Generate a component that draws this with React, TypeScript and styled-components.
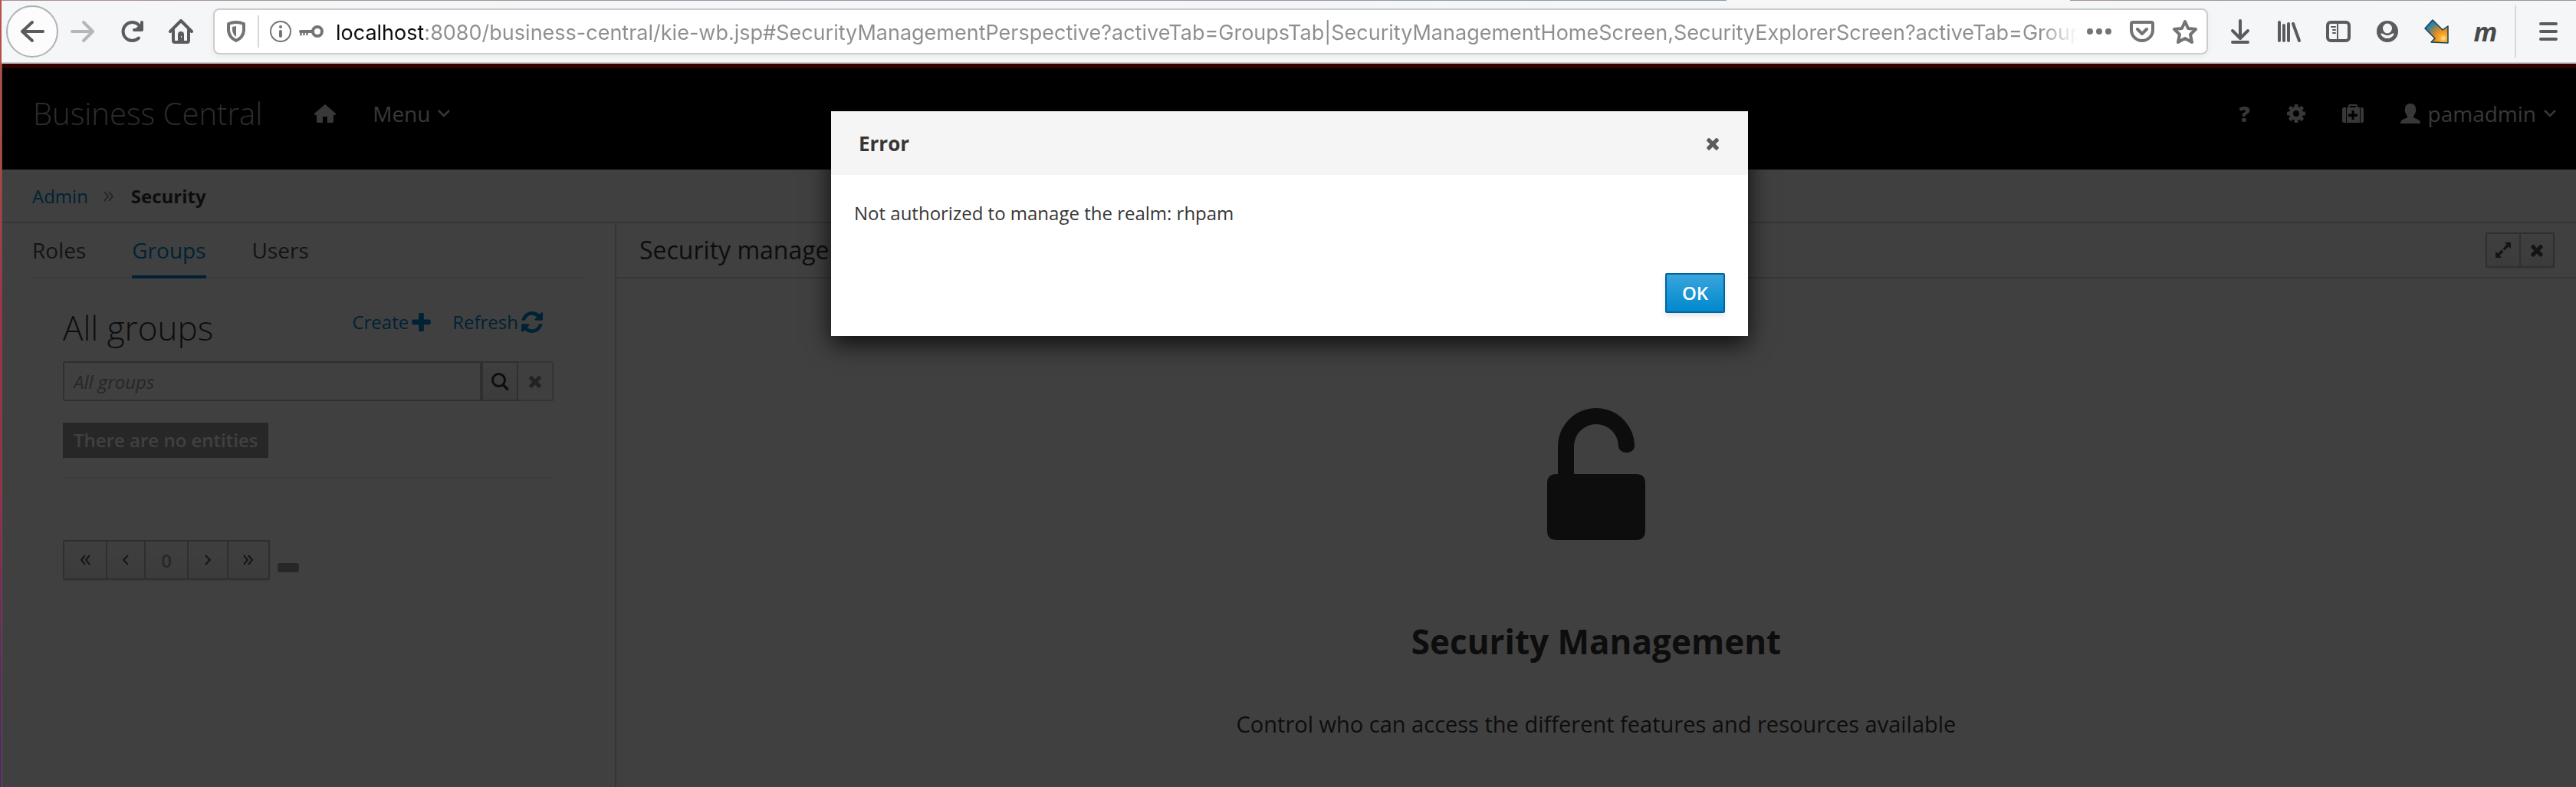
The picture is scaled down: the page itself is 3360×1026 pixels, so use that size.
import React from "react";
import styled, { createGlobalStyle, css } from "styled-components";

const colors = {
  text: "#363636",
  link: "#0088ce",
  border: "#d1d1d1",
  softBorder: "#ededed",
  control: "#bbbbbb",
  muted: "#9c9c9c",
  nav: "#dddddd",
  chrome: "#5a5b5d",
  urlIcon: "#737476",
};

const GlobalStyle = createGlobalStyle`
  *, *::before, *::after { box-sizing: border-box; }
  body {
    margin: 0;
    background: #fff;
    color: ${colors.text};
    font-family: "Open Sans", "Noto Sans", sans-serif;
    font-size: 24px;
  }
  button, input { font: inherit; color: inherit; }
  button { cursor: pointer; }
  svg { display: block; flex: none; }
  h1, h2, h3, p, ul, ol { margin: 0; padding: 0; }
`;

/* ---------- Window ---------- */

const Window = styled.div`
  min-height: 100vh;
  display: flex;
  flex-direction: column;
  padding-left: 2px;
  background: linear-gradient(#b9504b 0, #b8463f 20%, #b02a48 40%, #a82848 62%, #5c2a5c 85%, #4f2a5c 100%);
`;

const TabStrip = styled.div`
  display: grid;
  grid-template-columns: 2250fr 448fr 660fr;
  height: 1px;
  background: #f5f6f8;
`;

const TabEdge = styled.span`
  background: linear-gradient(to right, #a8909a, #8f9aa0);
`;

const Toolbar = styled.header`
  display: flex;
  align-items: center;
  height: 82px;
  padding: 0 4px 0 6px;
  background: #f5f6f8;
  border-bottom: 2px solid #cccccc;
`;

const ChromeButton = styled.button<{ $faded?: boolean }>`
  display: flex;
  align-items: center;
  justify-content: center;
  width: 64px;
  height: 64px;
  padding: 0;
  border: 0;
  background: none;
  color: ${(p) => (p.$faded ? "#b5b6b8" : colors.chrome)};
`;

const BackButton = styled(ChromeButton)`
  width: 68px;
  height: 68px;
  border: 2px solid #b1b1b3;
  border-radius: 50%;
  background: #fcfcfd;
`;

const ChromeDivider = styled.span`
  width: 2px;
  height: 68px;
  margin: 0 10px 0 6px;
  background: #d7d8da;
`;

const MonoMark = styled.span`
  font: italic 700 34px "Open Sans", sans-serif;
  line-height: 40px;
  color: #48494a;
`;

const UrlBar = styled.div`
  display: flex;
  align-items: center;
  flex: 1;
  min-width: 0;
  height: 60px;
  margin: 0 10px;
  border: 2px solid #cccccc;
  border-radius: 8px;
  background: #fff;
  box-shadow: 0 2px 8px rgba(0, 0, 0, 0.05);
  color: ${colors.urlIcon};
`;

const UrlButton = styled(ChromeButton)`
  width: 56px;
  height: 56px;
  flex: none;
  color: ${colors.urlIcon};
`;

const UrlDivider = styled.span`
  width: 2px;
  height: 42px;
  background: #d7d7db;
`;

const UrlIdentity = styled.span`
  display: flex;
  align-items: center;
  gap: 10px;
  padding: 0 16px 0 14px;
`;

const UrlInput = styled.input`
  flex: 1;
  min-width: 0;
  height: 56px;
  padding: 2px 0 0;
  border: 0;
  outline: 0;
  font-family: Inter, Roboto, sans-serif;
  font-size: 27px;
  -webkit-text-fill-color: transparent;
  background: linear-gradient(
    to right,
    #0c0c0d 0,
    #0c0c0d 114px,
    #8e8e8f 114px,
    #8e8e8f calc(100% - 48px),
    rgba(142, 142, 143, 0) 100%
  );
  -webkit-background-clip: text;
  background-clip: text;
`;

/* ---------- Application ---------- */

const Page = styled.div`
  position: relative;
  flex: 1;
  display: flex;
  flex-direction: column;
  border-left: 1px solid #555555;
  background: #fff;
`;

const Masthead = styled.nav`
  display: flex;
  align-items: center;
  height: 138px;
  padding: 0 26px 14px 40px;
  border-top: 6px solid #cc0000;
  background: #000;
  color: ${colors.nav};
  font-size: 28px;
`;

const Brand = styled.a`
  margin-right: 68px;
  color: #b4b4b4;
  font-size: 40px;
  font-weight: 300;
  line-height: 52px;
  text-decoration: none;
`;

const NavGroup = styled.div<{ $end?: boolean }>`
  display: flex;
  align-items: center;
  gap: 48px;
  ${(p) => p.$end && css`margin-left: auto;`}
`;

const NavButton = styled.button<{ $strong?: boolean }>`
  display: flex;
  align-items: center;
  gap: 10px;
  padding: 0;
  border: 0;
  background: none;
  line-height: 40px;
  font-weight: ${(p) => (p.$strong ? 800 : 400)};
`;

const Breadcrumb = styled.ol`
  display: flex;
  align-items: center;
  gap: 22px;
  height: 70px;
  padding: 2px 39px 0;
  border-bottom: 2px solid ${colors.border};
  list-style: none;
  line-height: 36px;
`;

const CrumbItem = styled.li<{ $current?: boolean }>`
  display: flex;
  align-items: center;
  gap: 20px;
  font-weight: ${(p) => (p.$current ? 700 : 400)};
  color: ${(p) => (p.$current ? colors.text : colors.muted)};
`;

const Link = styled.a`
  display: inline-flex;
  align-items: center;
  gap: 4px;
  color: ${colors.link};
  text-decoration: none;
`;

const Columns = styled.div`
  display: flex;
  flex: 1;
`;

const Sidebar = styled.aside`
  flex: 0 0 801px;
  border-right: 2px solid ${colors.border};
`;

const Tabs = styled.div`
  display: flex;
  gap: 60px;
  height: 72px;
  margin: 0 39px;
  border-bottom: 2px solid ${colors.softBorder};
`;

const Tab = styled.button<{ $active?: boolean }>`
  height: 72px;
  padding: 2px 0 0;
  border: 0;
  border-bottom: 4px solid ${(p) => (p.$active ? colors.link : "transparent")};
  background: none;
  color: ${(p) => (p.$active ? colors.link : "#4d5258")};
  font-size: 28px;
  line-height: 66px;
`;

const SidebarBody = styled.section`
  padding: 34px 80px 34px 79px;
`;

const ListHeader = styled.div`
  display: flex;
  justify-content: space-between;
  align-items: flex-start;
  padding-right: 14px;
`;

const ListTitle = styled.h2`
  font-size: 44px;
  font-weight: 300;
  line-height: 60px;
`;

const Actions = styled.div`
  display: flex;
  gap: 28px;
  line-height: 46px;
`;

const SearchForm = styled.form`
  display: flex;
  height: 52px;
  margin-top: 14px;
`;

const SearchInput = styled.input`
  flex: 1;
  min-width: 0;
  padding: 0 12px;
  border: 2px solid ${colors.control};
  border-radius: 2px 0 0 2px;
  outline: 0;
  background: #fff;
  &::placeholder {
    color: #999;
    font-style: italic;
    opacity: 1;
  }
`;

const raised = css`
  background: linear-gradient(#fafafa, #ededed);
  border: 2px solid ${colors.control};
`;

const SearchButton = styled.button<{ $plain?: boolean }>`
  display: flex;
  align-items: center;
  justify-content: center;
  width: ${(p) => (p.$plain ? "46px" : "48px")};
  padding: 0;
  ${raised}
  border-left-width: ${(p) => (p.$plain ? "0" : "2px")};
  ${(p) =>
    p.$plain &&
    css`
      background: #fafafa;
      border-color: ${colors.border};
      color: #8b8d8f;
    `}
`;

const EmptyLabel = styled.span`
  display: inline-block;
  margin-top: 28px;
  padding: 0 14px;
  background: ${colors.muted};
  color: #fff;
  font-weight: 600;
  line-height: 46px;
`;

const Rule = styled.hr`
  height: 2px;
  margin: 25px 0 80px;
  border: 0;
  background: ${colors.softBorder};
`;

const Pager = styled.div`
  display: flex;
  align-items: flex-end;
`;

const ButtonGroup = styled.div`
  display: flex;
  border-radius: 2px;
  box-shadow: 0 2px 4px rgba(0, 0, 0, 0.08);
`;

const GroupButton = styled.button<{ $w: number; $h: number; $dim?: boolean }>`
  display: flex;
  align-items: center;
  justify-content: center;
  width: ${(p) => p.$w}px;
  height: ${(p) => p.$h}px;
  padding: 0;
  ${raised}
  color: ${(p) => (p.$dim ? colors.muted : "#4d5258")};
  font-weight: ${(p) => (p.$dim ? 600 : 400)};
  & + & {
    margin-left: -2px;
  }
`;

const CountPill = styled.span`
  width: 28px;
  height: 12px;
  margin: 0 0 10px 10px;
  border-radius: 3px;
  background: ${colors.muted};
`;

const Content = styled.main`
  flex: 1;
  min-width: 0;
`;

const PanelHeader = styled.div`
  display: flex;
  align-items: center;
  justify-content: space-between;
  height: 72px;
  padding: 0 28px 0 30px;
  border-bottom: 2px solid ${colors.border};
`;

const PanelTitle = styled.h3`
  font-size: 32px;
  font-weight: 400;
  line-height: 44px;
`;

const BlankSlate = styled.section`
  display: flex;
  flex-direction: column;
  align-items: center;
  padding-top: 169px;
  text-align: center;
`;

const SlateTitle = styled.h1`
  margin-top: 102px;
  font-size: 44px;
  font-weight: 700;
  line-height: 60px;
`;

const SlateText = styled.p`
  margin-top: 58px;
  font-size: 29px;
  line-height: 40px;
`;

/* ---------- Dialog ---------- */

const Backdrop = styled.div`
  position: absolute;
  inset: 0;
  display: flex;
  justify-content: center;
  align-items: flex-start;
  padding: 62px 0 0 1px;
  background: rgba(0, 0, 0, 0.75);
`;

const Dialog = styled.div`
  width: 1196px;
  max-width: 100%;
  background: #fff;
  box-shadow: 0 10px 30px rgba(0, 0, 0, 0.8);
`;

const DialogHeader = styled.div`
  display: flex;
  align-items: center;
  justify-content: space-between;
  height: 83px;
  padding: 0 34px 0 36px;
  background: #f5f5f5;
`;

const DialogTitle = styled.h2`
  font-size: 26px;
  font-weight: 700;
  line-height: 36px;
`;

const CloseButton = styled.button`
  padding: 0;
  border: 0;
  background: none;
  color: #5c5c5c;
`;

const DialogBody = styled.p`
  padding: 30px 30px 0;
  line-height: 40px;
`;

const DialogFooter = styled.div`
  display: flex;
  justify-content: flex-end;
  padding: 58px 30px 30px;
`;

const PrimaryButton = styled.button`
  width: 78px;
  height: 52px;
  padding: 0 0 2px;
  border: 2px solid #00659c;
  border-radius: 2px;
  background: linear-gradient(#39a5dc, #0088ce);
  box-shadow: 0 4px 6px rgba(3, 3, 3, 0.1);
  color: #fff;
  font-weight: 600;
`;

/* ---------- Icons ---------- */

type IconProps = { d: string; w?: number; h?: number; box?: string };

const Glyph = ({ d, w = 28, h = w, box = "0 0 1792 1792" }: IconProps) => (
  <svg width={w} height={h} viewBox={box} fill="currentColor" aria-hidden="true">
    <path d={d} fillRule="evenodd" />
  </svg>
);

const Line = ({
  children,
  size = 32,
  width = 4,
}: {
  children: React.ReactNode;
  size?: number;
  width?: number;
}) => (
  <svg
    width={size}
    height={size}
    viewBox="0 0 32 32"
    fill="none"
    stroke="currentColor"
    strokeWidth={width}
    strokeLinecap="round"
    strokeLinejoin="round"
    aria-hidden="true"
  >
    {children}
  </svg>
);

const paths = {
  times:
    "M1490 1322q0 40-28 68l-136 136q-28 28-68 28t-68-28l-294-294-294 294q-28 28-68 28t-68-28l-136-136q-28-28-28-68t28-68l294-294-294-294q-28-28-28-68t28-68l136-136q28-28 68-28t68 28l294 294 294-294q28-28 68-28t68 28l136 136q28 28 28 68t-28 68l-294 294 294 294q28 28 28 68z",
  plus:
    "M1600 736v192q0 40-28 68t-68 28h-416v416q0 40-28 68t-68 28h-192q-40 0-68-28t-28-68v-416h-416q-40 0-68-28t-28-68v-192q0-40 28-68t68-28h416v-416q0-40 28-68t68-28h192q40 0 68 28t28 68v416h416q40 0 68 28t28 68z",
  refresh:
    "M1639 1056q0 5-1 7-64 268-268 434.500t-478 166.500q-146 0-282.500-55t-243.500-157l-129 129q-19 19-45 19t-45-19-19-45v-448q0-26 19-45t45-19h448q26 0 45 19t19 45-19 45l-137 137q71 66 161 102t187 36q134 0 250-65t186-179q11-17 53-117 8-23 30-23h192q13 0 22.500 9.500t9.500 22.500zm25-800v448q0 26-19 45t-45 19h-448q-26 0-45-19t-19-45 19-45l138-138q-148-137-349-137-134 0-250 65t-186 179q-11 17-53 117-8 23-30 23h-199q-13 0-22.500-9.500t-9.500-22.500v-7q65-268 270-434.500t480-166.500q146 0 284 55.500t245 156.500l130-129q19-19 45-19t45 19 19 45z",
  home: "M14 0L28 12Q28.500 14 26.500 14H25V22.500Q25 24 23.500 24H17V16H11V24H4.500Q3 24 3 22.500V14H1.500Q-.5 14 0 12Z",
  user: "M13 0C17.500 0 20 2.500 20 7C20 8 20.500 8.500 20.300 10C20 11.500 19.200 12 18.800 13.500C18.200 15.500 17 16 17 17.500C17 20 26 19 26 26H0C0 19 9 20 9 17.500C9 16 7.800 15.500 7.200 13.500C6.800 12 6 11.500 5.700 10C5.500 8.500 6 8 6 7C6 2.500 8.500 0 13 0Z",
  medkit:
    "M8 4V2Q8 0 10 0H18Q20 0 20 2V4H23V24H6V4ZM10 4H18V2H10ZM12.500 8V12.500H8V16H12.500V20H15.500V16H20V12.500H15.500V8ZM5 4V24H2.500Q0 24 0 21.500V6.500Q0 4 2.500 4ZM24 4H25.500Q28 4 28 6.500V21.500Q28 24 25.500 24H24Z",
  unlock:
    "M14 86V50A50 50 0 0 1 114 50V50A10.500 8 0 0 1 93 50A29 29 0 0 0 35 50V86H116Q128 86 128 98V160Q128 172 116 172H12Q0 172 0 160V98Q0 86 12 86Z",
  expand:
    "M12 0H20V8L17 5.500L12 10.500L9.500 8L14.500 3ZM8 20H0V12L3 14.500L8 9.500L10.500 12L5.500 17Z",
};

const Gear = () => (
  <svg width="24" height="24" viewBox="0 0 24 24" fill="currentColor" aria-hidden="true">
    <mask id="hub">
      <rect width="24" height="24" fill="#fff" />
      <circle cx="12" cy="12" r="4" fill="#000" />
    </mask>
    <g mask="url(#hub)">
      <circle cx="12" cy="12" r="9" />
      {[0, 45, 90, 135].map((a) => (
        <rect key={a} x="9.500" y="0" width="5" height="24" rx="1" transform={`rotate(${a} 12 12)`} />
      ))}
    </g>
  </svg>
);

const ChevronDown = () => (
  <svg width="16" height="10" viewBox="0 0 16 10" fill="none" stroke="currentColor" strokeWidth="2.500" aria-hidden="true">
    <path d="M1 1L8 8L15 1" />
  </svg>
);

const Angle = ({ double, left, size = 14 }: { double?: boolean; left?: boolean; size?: number }) => (
  <svg
    width={size}
    height={size}
    viewBox="0 0 14 14"
    fill="none"
    stroke="currentColor"
    strokeWidth="2"
    aria-hidden="true"
  >
    <g transform={left ? "rotate(180 7 7)" : undefined}>
      {double ? <path d="M1 1L6 7L1 13M7 1L12 7L7 13" /> : <path d="M4 1L10 7L4 13" />}
    </g>
  </svg>
);

const SearchIcon = () => (
  <svg width="24" height="24" viewBox="0 0 24 24" fill="none" stroke="currentColor" aria-hidden="true">
    <circle cx="10.500" cy="10.500" r="8" strokeWidth="3" />
    <path d="M16.500 17L21.500 22" strokeWidth="3.500" strokeLinecap="round" />
  </svg>
);

const ExtensionArrow = () => (
  <svg width="32" height="32" viewBox="0 0 32 32" aria-hidden="true">
    <defs>
      <radialGradient id="glow" gradientUnits="userSpaceOnUse" cx="25" cy="25" r="25">
        <stop offset="0" stopColor="#fff3b8" />
        <stop offset="0.160" stopColor="#fbb030" />
        <stop offset="0.400" stopColor="#ee8f1c" />
        <stop offset="0.700" stopColor="#8f8455" />
        <stop offset="1" stopColor="#1f7fae" />
      </radialGradient>
    </defs>
    <path
      d="M11 1L24 14L31 9L31 31L9 30L14 25L1 12Z"
      fill="url(#glow)"
      stroke="#15425c"
      strokeWidth="1.500"
      strokeLinejoin="round"
    />
  </svg>
);

const URL_TEXT =
  "localhost:8080/business-central/kie-wb.jsp#SecurityManagementPerspective?activeTab=GroupsTab|SecurityManagementHomeScreen,SecurityExplorerScreen?activeTab=GroupsTab";

const BrowserToolbar = () => (
  <>
    <TabStrip>
      <TabEdge />
      <span />
      <TabEdge />
    </TabStrip>
    <Toolbar>
      <BackButton aria-label="Back">
        <Line>
          <path d="M30 16H3M16 4L3 16L16 28" />
        </Line>
      </BackButton>
      <ChromeButton $faded aria-label="Forward">
        <Line>
          <path d="M2 16H29M17 4L29 16L17 28" />
        </Line>
      </ChromeButton>
      <ChromeButton aria-label="Reload">
        <Line>
          <path d="M25 24.500A12 12 0 1 1 25.500 8" />
          <path d="M29 4V14H19Z" fill="currentColor" stroke="none" />
          <path d="M29 4V14H19" />
        </Line>
      </ChromeButton>
      <ChromeButton aria-label="Home">
        <Line>
          <path d="M2 16L16 2L30 16M6 14V28Q6 30 8 30H24Q26 30 26 28V14" />
          <path d="M12 30V20Q12 16 16 16T20 20V30ZM16 22H17V24H16Z" fill="currentColor" fillRule="evenodd" stroke="none" />
        </Line>
      </ChromeButton>
      <UrlBar>
        <UrlButton aria-label="Tracking protection">
          <svg width="24" height="28" viewBox="0 0 24 28" aria-hidden="true">
            <path
              d="M12 2Q17 2 22 4V13Q21 22 12 26Q3 22 2 13V4Q7 2 12 2Z"
              fill="none"
              stroke="currentColor"
              strokeWidth="4"
              strokeLinejoin="round"
            />
            <path d="M12 7V21Q8 18 7 13V8Z" fill="currentColor" />
          </svg>
        </UrlButton>
        <UrlDivider />
        <UrlIdentity>
          <svg width="28" height="28" viewBox="0 0 28 28" aria-hidden="true">
            <circle cx="14" cy="14" r="13" fill="none" stroke="currentColor" strokeWidth="2" />
            <circle cx="14" cy="8" r="2" fill="currentColor" />
            <path d="M14 14V20" stroke="currentColor" strokeWidth="4" strokeLinecap="round" />
          </svg>
          <svg width="32" height="16" viewBox="0 0 32 16" aria-hidden="true">
            <circle cx="24" cy="8" r="6" fill="none" stroke="currentColor" strokeWidth="4" />
            <path d="M2 8H17" fill="none" stroke="currentColor" strokeWidth="4" strokeLinecap="round" />
            <path d="M2.500 8V12.500M6.500 8V12M10.500 8V12" fill="none" stroke="currentColor" strokeWidth="2.500" strokeLinecap="round" />
          </svg>
        </UrlIdentity>
        <UrlInput aria-label="Address" defaultValue={URL_TEXT} />
        <UrlButton aria-label="Page actions">
          <svg width="32" height="8" viewBox="0 0 32 8" fill="currentColor" aria-hidden="true">
            <circle cx="4" cy="4" r="4" />
            <circle cx="16" cy="4" r="4" />
            <circle cx="28" cy="4" r="4" />
          </svg>
        </UrlButton>
        <UrlButton aria-label="Save to Pocket">
          <Line>
            <path d="M4 4H28Q30 4 30 6V14A14 14 0 0 1 2 14V6Q2 4 4 4Z" />
            <path d="M10 13L16 19L22 13" />
          </Line>
        </UrlButton>
        <UrlButton aria-label="Bookmark">
          <Line>
            <path d="M16 3L20 12L30 13L23 20L25 30L16 25L7 30L9 20L2 13L12 12Z" />
          </Line>
        </UrlButton>
      </UrlBar>
      <ChromeButton aria-label="Downloads">
        <Line>
          <path d="M16 2V24M6 15L16 25L26 15M6 30H26" />
        </Line>
      </ChromeButton>
      <ChromeButton aria-label="Library">
        <Line>
          <path d="M3 4V28M9 8V28M15 6V28M21 6L29 28" />
        </Line>
      </ChromeButton>
      <ChromeButton aria-label="Sidebars">
        <Line>
          <rect x="2" y="4" width="28" height="24" rx="4" />
          <path d="M15 5V27M7 10H12M9 14H12M9 18H12" strokeWidth="2" />
        </Line>
      </ChromeButton>
      <ChromeButton aria-label="Account">
        <svg width="32" height="32" viewBox="0 0 32 32" aria-hidden="true">
          <circle cx="16" cy="16" r="14" fill="currentColor" />
          <ellipse cx="16" cy="12" rx="6" ry="6.500" fill="#f5f6f8" />
          <path d="M7 19Q9 18 11 19.500Q16 23 21 19.500Q23 18 25 19Q22 25 16 25Q10 25 7 19Z" fill="#f5f6f8" />
        </svg>
      </ChromeButton>
      <ChromeButton aria-label="Extension">
        <ExtensionArrow />
      </ChromeButton>
      <ChromeButton aria-label="Momentum">
        <MonoMark>m</MonoMark>
      </ChromeButton>
      <ChromeDivider />
      <ChromeButton aria-label="Open menu">
        <Line>
          <path d="M6 6H26M6 16H26M6 26H26" />
        </Line>
      </ChromeButton>
    </Toolbar>
  </>
);

const Nav = () => (
  <Masthead>
    <Brand href="#">Business Central</Brand>
    <NavGroup>
      <NavButton aria-label="Home">
        <Glyph d={paths.home} w={28} h={24} box="0 0 28 24" />
      </NavButton>
      <NavButton>
        Menu <ChevronDown />
      </NavButton>
    </NavGroup>
    <NavGroup $end>
      <NavButton $strong aria-label="Help">?</NavButton>
      <NavButton aria-label="Settings">
        <Gear />
      </NavButton>
      <NavButton aria-label="Toolbox">
        <Glyph d={paths.medkit} w={28} h={24} box="0 0 28 24" />
      </NavButton>
      <NavButton>
        <Glyph d={paths.user} w={26} h={26} box="0 0 26 26" />
        pamadmin <ChevronDown />
      </NavButton>
    </NavGroup>
  </Masthead>
);

const GroupsPanel = () => (
  <Sidebar>
    <Tabs role="tablist">
      <Tab role="tab">Roles</Tab>
      <Tab role="tab" aria-selected $active>
        Groups
      </Tab>
      <Tab role="tab">Users</Tab>
    </Tabs>
    <SidebarBody>
      <ListHeader>
        <ListTitle>All groups</ListTitle>
        <Actions>
          <Link href="#create">
            Create <Glyph d={paths.plus} w={25} box="176 144 1440 1440" />
          </Link>
          <Link href="#refresh">
            Refresh <Glyph d={paths.refresh} w={28} box="128 128 1536 1536" />
          </Link>
        </Actions>
      </ListHeader>
      <SearchForm onSubmit={(e) => e.preventDefault()}>
        <SearchInput aria-label="All groups" placeholder="All groups" />
        <SearchButton type="submit" aria-label="Search">
          <SearchIcon />
        </SearchButton>
        <SearchButton type="reset" aria-label="Clear" $plain>
          <Glyph d={paths.times} w={24} />
        </SearchButton>
      </SearchForm>
      <EmptyLabel>There are no entities</EmptyLabel>
      <Rule />
      <Pager>
        <ButtonGroup>
          <GroupButton $w={58} $h={52} aria-label="First page">
            <Angle double left />
          </GroupButton>
          <GroupButton $w={52} $h={52} aria-label="Previous page">
            <Angle left />
          </GroupButton>
          <GroupButton $w={58} $h={52} $dim>
            0
          </GroupButton>
          <GroupButton $w={54} $h={52} aria-label="Next page">
            <Angle />
          </GroupButton>
          <GroupButton $w={56} $h={52} aria-label="Last page">
            <Angle double />
          </GroupButton>
        </ButtonGroup>
        <CountPill />
      </Pager>
    </SidebarBody>
  </Sidebar>
);

const ManagementPanel = () => (
  <Content>
    <PanelHeader>
      <PanelTitle>Security management</PanelTitle>
      <ButtonGroup>
        <GroupButton $w={46} $h={46} aria-label="Maximize">
          <Glyph d={paths.expand} w={20} box="0 0 20 20" />
        </GroupButton>
        <GroupButton $w={46} $h={46} aria-label="Close panel">
          <Glyph d={paths.times} w={24} />
        </GroupButton>
      </ButtonGroup>
    </PanelHeader>
    <BlankSlate>
      <Glyph d={paths.unlock} w={128} h={172} box="0 0 128 172" />
      <SlateTitle>Security Management</SlateTitle>
      <SlateText>Control who can access the different features and resources available</SlateText>
    </BlankSlate>
  </Content>
);

const ErrorDialog = () => (
  <Backdrop>
    <Dialog role="alertdialog" aria-labelledby="dialog-title" aria-describedby="dialog-message">
      <DialogHeader>
        <DialogTitle id="dialog-title">Error</DialogTitle>
        <CloseButton aria-label="Close">
          <Glyph d={paths.times} w={24} />
        </CloseButton>
      </DialogHeader>
      <DialogBody id="dialog-message">Not authorized to manage the realm: rhpam</DialogBody>
      <DialogFooter>
        <PrimaryButton>OK</PrimaryButton>
      </DialogFooter>
    </Dialog>
  </Backdrop>
);

export default function App() {
  return (
    <>
      <GlobalStyle />
      <Window>
        <BrowserToolbar />
        <Page>
          <Nav />
          <Breadcrumb>
            <CrumbItem>
              <Link href="#admin">Admin</Link>
              <Angle double />
            </CrumbItem>
            <CrumbItem $current>Security</CrumbItem>
          </Breadcrumb>
          <Columns>
            <GroupsPanel />
            <ManagementPanel />
          </Columns>
          <ErrorDialog />
        </Page>
      </Window>
    </>
  );
}
